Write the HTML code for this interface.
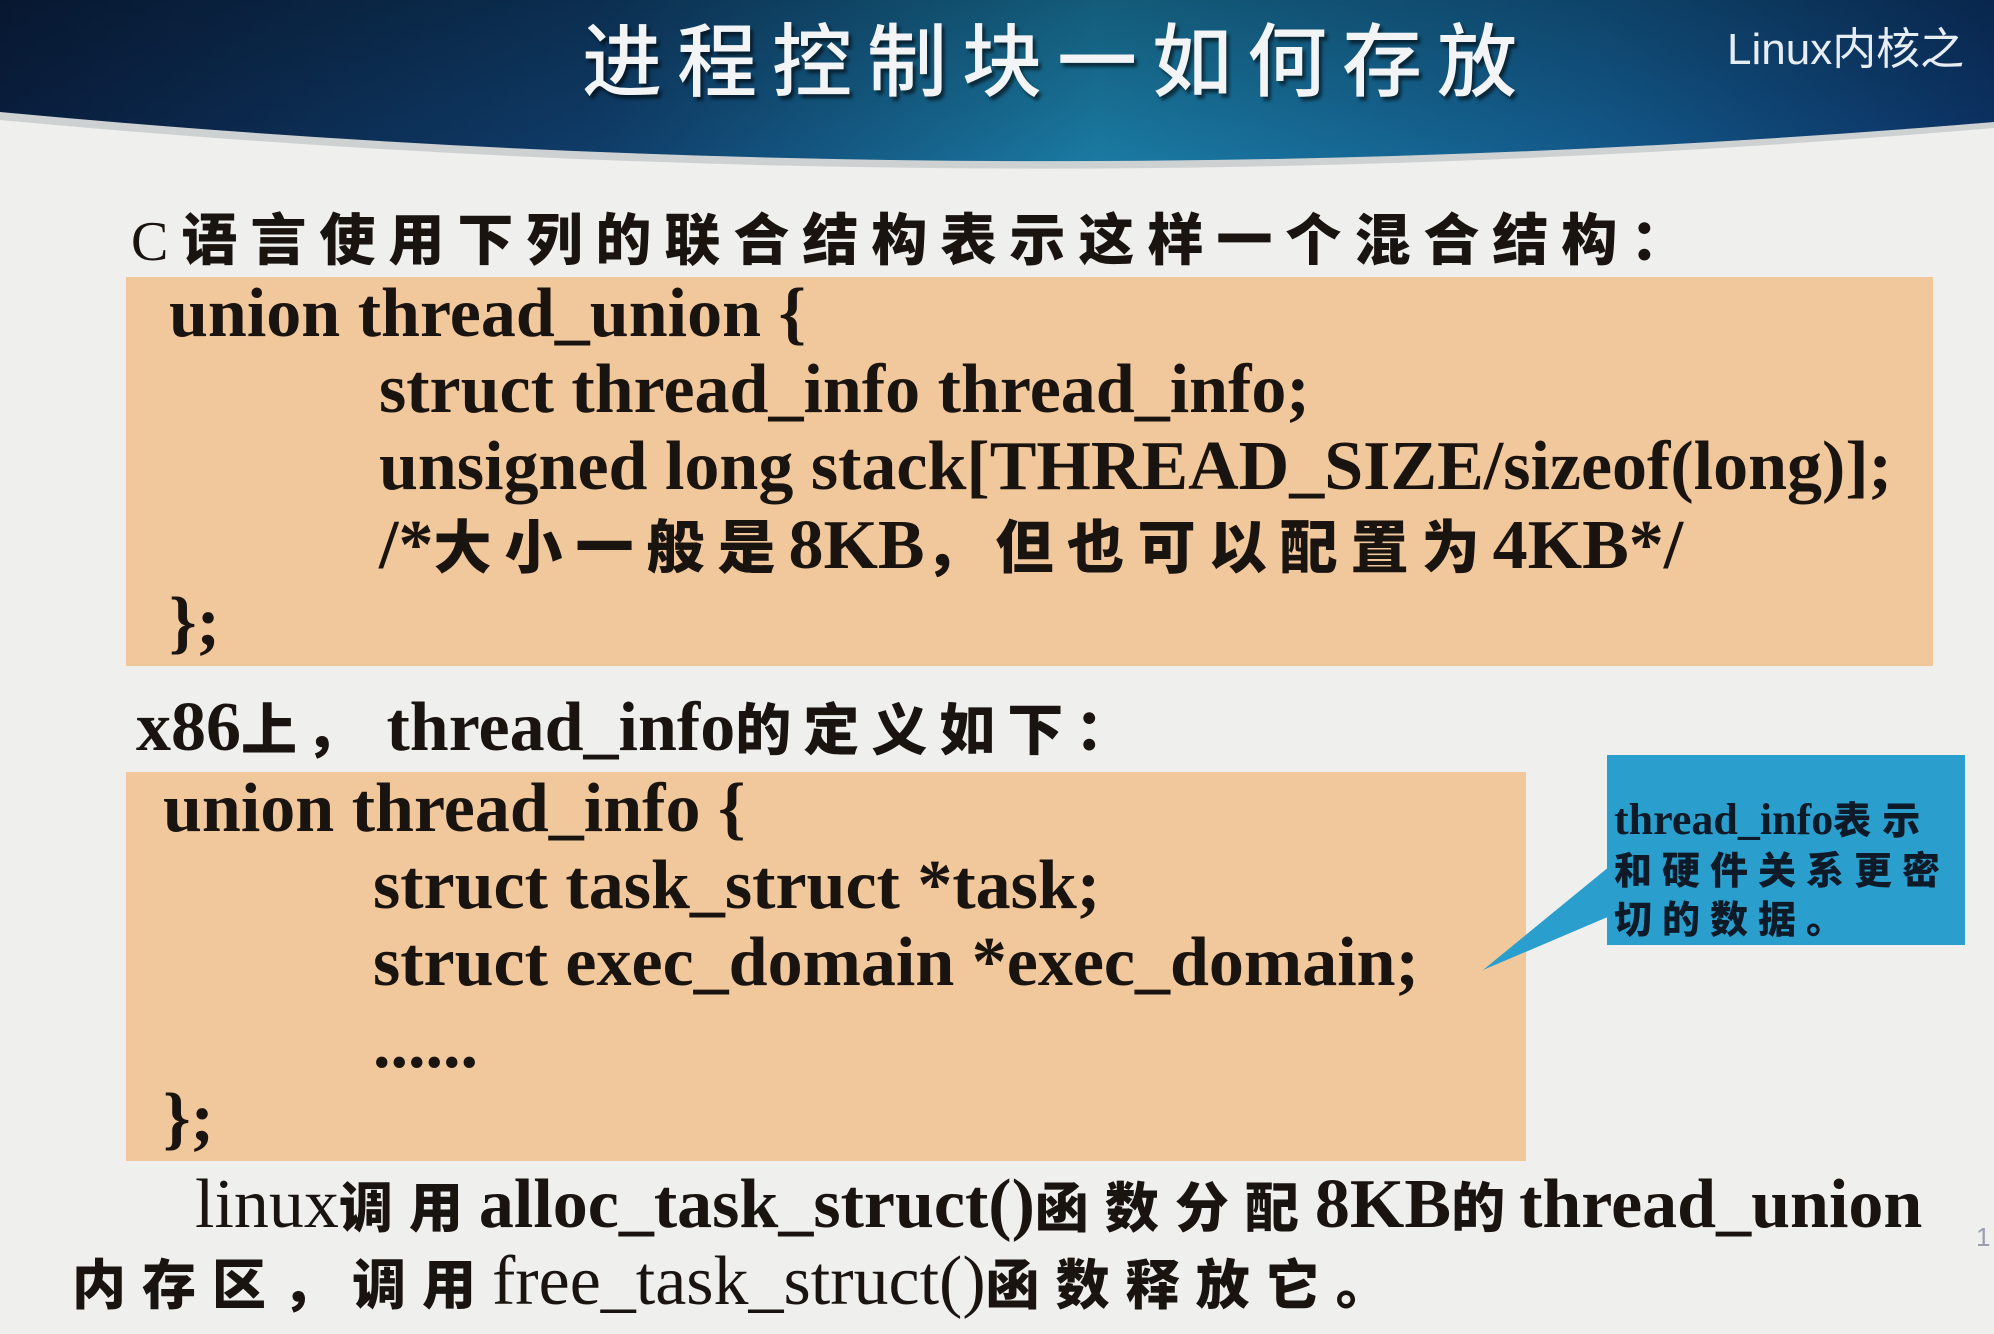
<!DOCTYPE html>
<html><head><meta charset="utf-8"><style>
html,body{margin:0;padding:0}
body{width:1994px;height:1334px;position:relative;overflow:hidden;background:#efefee;font-family:"Liberation Serif","Noto Sans CJK SC",serif;color:#1a1410}
.t{position:absolute;white-space:nowrap;line-height:80px;height:80px;font-weight:bold;font-size:70px}
.cj{font-family:"Noto Sans CJK SC",sans-serif;font-weight:900}
.box{position:absolute;background:#f1c79c}
</style></head><body>
<svg width="1994" height="200" style="position:absolute;left:0;top:0">
<defs>
<linearGradient id="g" x1="0" y1="0" x2="1" y2="0">
<stop offset="0" stop-color="#0a1f40"/>
<stop offset="0.3" stop-color="#0f3d6a"/>
<stop offset="0.55" stop-color="#1a7aa2"/>
<stop offset="0.8" stop-color="#135a8c"/>
<stop offset="1" stop-color="#0c3366"/>
</linearGradient>
<linearGradient id="v" x1="0" y1="0" x2="0" y2="1">
<stop offset="0" stop-color="#000" stop-opacity="0.25"/>
<stop offset="1" stop-color="#000" stop-opacity="0"/>
</linearGradient>
</defs>
<path d="M0 0 H1994 V128 Q997 213 0 120 Z" fill="#b8bcc0" opacity="0.6"/>
<path d="M0 0 H1994 V122 Q997 205 0 112 Z" fill="url(#g)"/>
<path d="M0 0 H1994 V122 Q997 205 0 112 Z" fill="url(#v)"/>
</svg>
<div style="position:absolute;left:582px;top:8px;font-family:'Noto Sans CJK SC',sans-serif;font-weight:500;font-size:80px;line-height:96px;letter-spacing:15px;color:#f2f4f6;text-shadow:3px 4px 3px rgba(0,0,0,.55);white-space:nowrap">进程控制块一如何存放</div>
<div style="position:absolute;left:1727px;top:20px;font-family:'Liberation Sans','Noto Sans CJK SC',sans-serif;font-size:44px;line-height:60px;color:#e6edf3;white-space:nowrap">Linux内核之</div>

<div class="t" style="left:131px;top:197px;font-size:56px;letter-spacing:13px"><span style="font-weight:normal">C</span><span class="cj">语言使用下列的联合结构表示这样一个混合结构：</span></div>

<div class="box" style="left:126px;top:277px;width:1807px;height:389px"></div>
<div class="t" style="left:169px;top:274px">union thread_union {</div>
<div class="t" style="left:379px;top:350px">struct thread_info thread_info;</div>
<div class="t" style="left:379px;top:427px">unsigned long stack[THREAD_SIZE/sizeof(long)];</div>
<div class="t" style="left:379px;top:503px">/*<span class="cj" style="font-size:58px;letter-spacing:13px">大小一般是</span>8KB<span class="cj" style="font-size:58px;letter-spacing:13px">，但也可以配置为</span>4KB*/</div>
<div class="t" style="left:169px;top:583px">};</div>

<div class="t" style="left:136px;top:687px">x86<span class="cj" style="font-size:56px;letter-spacing:8px">上，</span> thread_info<span class="cj" style="font-size:56px;letter-spacing:12px">的定义如下：</span></div>

<div class="box" style="left:126px;top:772px;width:1400px;height:389px"></div>
<div class="t" style="left:163px;top:769px">union thread_info {</div>
<div class="t" style="left:373px;top:846px">struct task_struct *task;</div>
<div class="t" style="left:373px;top:923px">struct exec_domain *exec_domain;</div>
<div class="t" style="left:373px;top:1005px">......</div>
<div class="t" style="left:163px;top:1079px">};</div>

<svg width="1994" height="1334" style="position:absolute;left:0;top:0;pointer-events:none">
<polygon points="1483,970 1610,866 1610,916" fill="#2a9fcd"/>
</svg>
<div style="position:absolute;left:1607px;top:755px;width:358px;height:190px;background:#2a9fcd"></div>
<div class="t" style="left:1614px;top:788px;font-size:44px;line-height:60px;height:60px;color:#0e1a28">thread_info<span class="cj" style="font-size:38px;letter-spacing:11px">表示</span></div>
<div class="t cj" style="left:1614px;top:838px;font-size:38px;line-height:60px;height:60px;letter-spacing:10px;color:#0e1a28">和硬件关系更密</div>
<div class="t cj" style="left:1614px;top:887px;font-size:38px;line-height:60px;height:60px;letter-spacing:10px;color:#0e1a28">切的数据。</div>

<div class="t" style="left:195px;top:1164px"><span style="font-weight:normal">linux</span><span class="cj" style="font-size:54px;letter-spacing:16px">调用</span>alloc_task_struct()<span class="cj" style="font-size:54px;letter-spacing:16px">函数分配</span>8KB<span class="cj" style="font-size:54px;letter-spacing:14px">的</span>thread_union</div>
<div class="t" style="left:72px;top:1241px"><span class="cj" style="font-size:54px;letter-spacing:16px">内存区，调用</span><span style="font-weight:normal">free_task_struct()</span><span class="cj" style="font-size:54px;letter-spacing:16px">函数释放它。</span></div>
<div style="position:absolute;left:1976px;top:1222px;font-family:'Liberation Sans',sans-serif;font-size:26px;color:#9aa0b0">1</div>
</body></html>
